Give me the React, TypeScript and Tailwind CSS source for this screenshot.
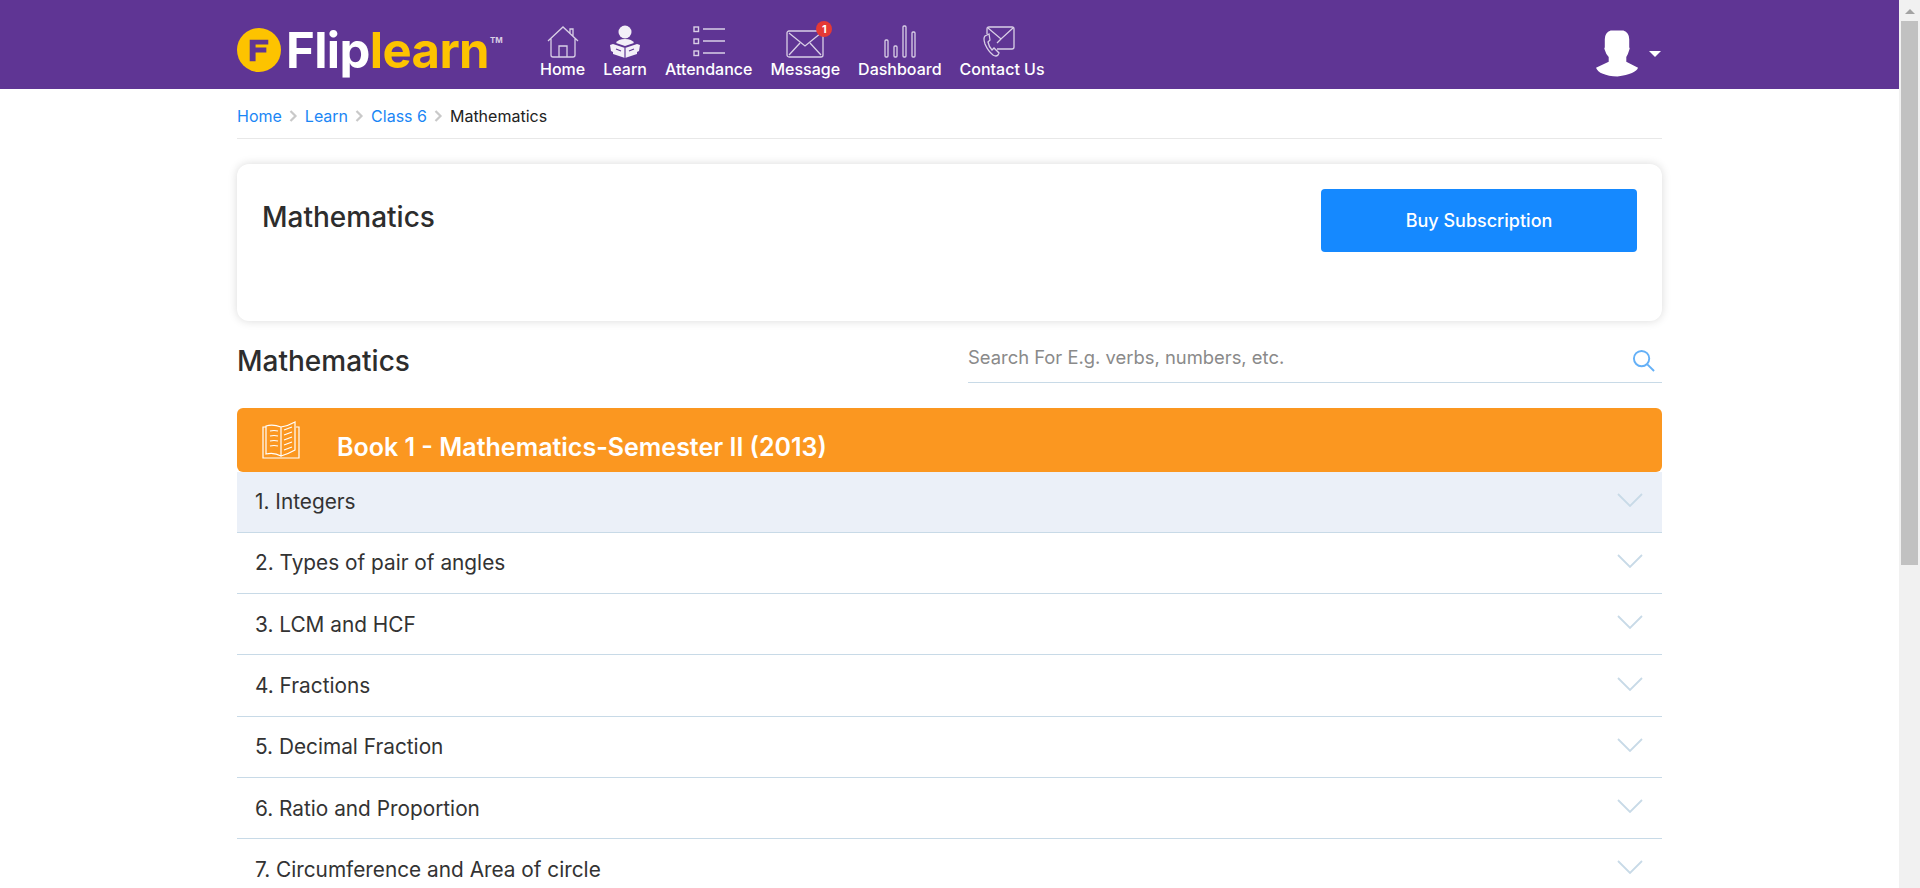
const font = "font-['Inter','Liberation_Sans',sans-serif]";

const navItems = [
  { label: "Home", icon: <HomeIcon /> },
  { label: "Learn", icon: <LearnIcon /> },
  { label: "Attendance", icon: <ListIcon /> },
  { label: "Message", icon: <MailIcon /> },
  { label: "Dashboard", icon: <BarsIcon /> },
  { label: "Contact Us", icon: <ContactIcon /> },
];

const chapters = [
  "1. Integers",
  "2. Types of pair of angles",
  "3. LCM and HCF",
  "4. Fractions",
  "5. Decimal Fraction",
  "6. Ratio and Proportion",
  "7. Circumference and Area of circle",
];

function HomeIcon() {
  return (
    <svg width="32" height="32" viewBox="0 0 32 32" fill="none" stroke="#d9cfe6" strokeWidth="1.3">
      <path d="M1 15 16 1l15 14M4 12v17q0 2 2 2h20q2 0 2-2V12M12 31V20h8v11M23 7V3h3v7" />
    </svg>
  );
}

function LearnIcon() {
  return (
    <svg width="32" height="33" viewBox="0 0 32 33" fill="#f3eff8">
      <circle cx="16" cy="7" r="6.5" />
      <path d="M7 18q2-4 9-4t9 4l-9 3z" />
      <path d="M1 20l3-1 12 4 12-4 3 1-1 6-2 1v2l-12 4-12-4v-2l-2-1z" />
      <path d="M16 23v10M7 24l5 2M20 26l5-2" stroke="#5f3594" strokeWidth="1.2" />
    </svg>
  );
}

function ListIcon() {
  return (
    <svg width="32" height="31" viewBox="0 0 32 31" fill="none" stroke="#d9cfe6" strokeWidth="1.4">
      <rect x="1" y="1" width="4.5" height="4.5" />
      <rect x="1" y="13" width="4.5" height="4.5" />
      <rect x="1" y="25" width="4.5" height="4.5" />
      <path d="M10 3h22M10 15h22M10 27h22" />
    </svg>
  );
}

function MailIcon() {
  return (
    <div className="relative mt-[5px]">
      <svg width="38" height="28" viewBox="0 0 38 28" fill="none" stroke="#d9cfe6" strokeWidth="1.3">
        <rect x="1" y="1" width="36" height="26" rx="2" />
        <path d="M3 3l16 13L35 3M3 25l11-12M35 25 24 13" />
      </svg>
      <span className="absolute -top-[9px] -right-[8px] flex h-4 w-4 items-center justify-center rounded-full bg-[#e53935] text-[11px] font-bold text-white">
        1
      </span>
    </div>
  );
}

function BarsIcon() {
  return (
    <svg width="32" height="33" viewBox="0 0 32 33" fill="none" stroke="#d9cfe6" strokeWidth="1.3">
      <rect x="1" y="15" width="3" height="17" rx="1" />
      <rect x="10" y="21" width="3" height="11" rx="1" />
      <rect x="19" y="1" width="3" height="31" rx="1" />
      <rect x="28" y="7" width="3" height="25" rx="1" />
    </svg>
  );
}

function ContactIcon() {
  return (
    <svg width="33" height="32" viewBox="0 0 33 32" fill="none" stroke="#d9cfe6" strokeWidth="1.3" className="mr-[7px]">
      <path d="M5 8V3q0-2 2-2h23q2 0 2 2v18q0 2-2 2H15" />
      <path d="M6 2l13 11L31 2M19 13l-4 4" />
      <path d="M7 8 3 10q-2 2 0 8 3 7 8 11 3 2 5 0l1-2-5-5-2 2q-3-3-4-8l2-2z" />
    </svg>
  );
}

function UserIcon() {
  return (
    <svg width="43" height="50" viewBox="0 0 44 50" fill="#fff">
      <path d="M15 1h13q6 2 6 9v8q1 1 0 3-1 4-3 7v5l12 6q-2 6-21 9Q3 47 0 39l13-6v-5q-3-3-4-7-1-2 0-3v-8q0-7 6-9z" />
    </svg>
  );
}

function BookIcon() {
  return (
    <svg width="38" height="38" viewBox="0 0 38 38" fill="none" stroke="#fff" strokeWidth="1.2">
      <path d="M4 6H1v31h36V6h-3" />
      <path d="M19 35V6Q11 3 4 5v28q8-2 15 2zM19 35V6q7-1 14-5v28q-7 4-14 6z" />
      <path d="M8 10q4-1 8 0M8 15q4-1 8 0M8 20q4-1 8 0M8 25q4-1 8 0M22 9l8-3M22 14l8-3M22 19l8-3M22 24l8-3M22 29l8-3" />
    </svg>
  );
}

function Chevron() {
  return (
    <svg width="26" height="14" viewBox="0 0 26 14" fill="none" stroke="#c8dae7" strokeWidth="1.8" className="mb-[4px]">
      <path d="M1 1l12 12L25 1" />
    </svg>
  );
}

function Crumb({ label }: { label: string }) {
  return (
    <>
      <span className="text-[#1a86f5]">{label}</span>
      <svg width="9" height="12" viewBox="0 0 9 12" fill="none" stroke="#c9c9c9" strokeWidth="2.2">
        <path d="M1.5 1l5 5-5 5" />
      </svg>
    </>
  );
}

function Scrollbar() {
  return (
    <div className="flex h-full w-[21px] shrink-0 flex-col items-center bg-[#f1f1f1]">
      <div className="flex h-[21px] w-full items-center justify-center pt-[2px]">
        <div className="h-0 w-0 border-x-[5px] border-b-[5px] border-x-transparent border-b-[#a3a3a3]" />
      </div>
      <div className="h-[544px] w-[17px] bg-[#c1c1c1]" />
    </div>
  );
}

export default function App() {
  return (
    <div className={`flex h-[888px] overflow-hidden bg-white ${font}`}>
      <div className="min-w-0 flex-1 overflow-hidden">
        <header className="h-[89px] bg-[#5f3594] pt-[11px]">
          <div className="mx-auto flex h-full w-[1425px] items-center">
            <div className="flex w-[303px] items-center">
              <svg width="44" height="44" viewBox="0 0 45 45" className="mr-[5px] shrink-0">
                <circle cx="22.5" cy="22.5" r="22.5" fill="#fdc300" />
                <path d="M13 12h19v5H19v3h11v5H19v9h-6z" fill="#5f3594" />
              </svg>
              <span className="text-[49px] leading-none font-bold tracking-[-0.6px] text-white">
                Flip<span className="text-[#fdc300]">learn</span>
              </span>
              <span className="mb-5 ml-[1px] text-[8px] font-bold text-[#d9cfe6]">TM</span>
            </div>
            <nav className="flex gap-[18px] pt-[3px]">
              {navItems.map((item) => (
                <div key={item.label} className="flex flex-col items-center">
                  <div className="flex h-[34px] items-center">{item.icon}</div>
                  <span className="text-[16px] leading-[20px] font-medium whitespace-nowrap text-white">{item.label}</span>
                </div>
              ))}
            </nav>
            <div className="mt-[8px] ml-auto flex items-center gap-[10px] pr-[1px]">
              <UserIcon />
              <div className="h-0 w-0 border-x-[6px] border-t-[6px] border-x-transparent border-t-white" />
            </div>
          </div>
        </header>

        <main className="mx-auto w-[1425px]">
          <div className="flex h-[50px] items-center gap-[7px] border-b border-[#e8e8e8] pt-[4px] text-[16px] text-[#222]">
            <Crumb label="Home" />
            <Crumb label="Learn" />
            <Crumb label="Class 6" />
            <span>Mathematics</span>
          </div>

          <section className="mt-[25px] flex h-[157px] justify-between rounded-[12px] bg-white p-[25px] shadow-[0_0_10px_rgba(0,0,0,0.15)]">
            <h1 className="pt-[12px] text-[28px] leading-[32px] font-medium text-[#2d2d2d]">Mathematics</h1>
            <button className="h-[63px] w-[316px] rounded-[4px] bg-[#1589ff] text-[18px] font-medium text-white">
              Buy Subscription
            </button>
          </section>

          <div className="mt-[21px] flex h-[41px] items-start justify-between">
            <h2 className="pt-[3px] text-[28px] leading-[32px] font-medium text-[#2d2d2d]">Mathematics</h2>
            <div className="flex h-[41px] w-[694px] items-center justify-between border-b border-[#c8dae7] pb-[9px]">
              <span className="text-[18.4px] text-[#8a8a8a]">Search For E.g. verbs, numbers, etc.</span>
              <svg width="23" height="23" viewBox="0 0 24 24" fill="none" stroke="#64b0f7" strokeWidth="2" className="mt-[6px] mr-[7px]">
                <circle cx="10" cy="10" r="8" />
                <path d="M16 16l7 7" />
              </svg>
            </div>
          </div>

          <div className="mt-[25px] flex h-[63.5px] items-center rounded-[6px] bg-[#fb9720] pl-[25px]">
            <BookIcon />
            <span className="ml-[37px] pt-[16px] text-[25px] font-semibold whitespace-nowrap text-white">
              Book 1 - Mathematics-Semester II (2013)
            </span>
          </div>

          {chapters.map((chapter, i) => (
            <div
              key={chapter}
              className={`flex h-[61.3px] items-center justify-between border-b border-[#c8dae7] pr-[19px] pl-[18px] text-[20.8px] text-[#333] ${i === 0 ? "bg-[#ebf0f8]" : ""}`}
            >
              <span>{chapter}</span>
              <Chevron />
            </div>
          ))}
        </main>
      </div>
      <Scrollbar />
    </div>
  );
}
